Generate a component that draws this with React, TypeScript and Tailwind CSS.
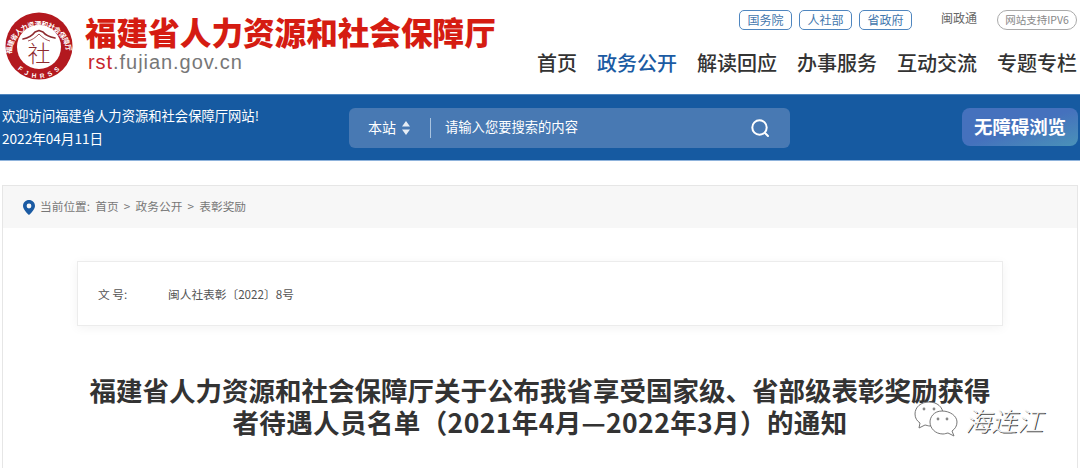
import React from 'react';

const FONT = "font-['Noto_Sans_CJK_SC','Noto_Sans',sans-serif]";

const Logo: React.FC = () => (
  <svg width="70" height="70" viewBox="0 0 70 70" className="shrink-0">
    <defs>
      <path id="ringTop" d="M8.5 42 A27.5 27.5 0 1 1 63.5 42" />
      <path id="ringBottom" d="M7 42 A29.5 29.5 0 0 0 65 42" />
    </defs>
    <circle cx="36" cy="34" r="33.5" fill="#b3191f" />
    <circle cx="36" cy="35" r="22" fill="#fff" />
    <text fontSize="7" fontWeight="700" fill="#fff" fontFamily="Noto Sans CJK SC, serif" textLength="84">
      <textPath href="#ringTop">福建省人力资源和社会保障厅</textPath>
    </text>
    <text fontSize="6.5" fontWeight="700" fill="#fff" fontFamily="Liberation Sans, sans-serif" letterSpacing="4.2">
      <textPath href="#ringBottom" startOffset="17">FJHRSS</textPath>
    </text>
    {/* roof */}
    <path d="M20 27 C25 26 29 24 32 20 L36 18.5 L40 20 C43 24 47 25 52 26" fill="none" stroke="#8e2a2e" strokeWidth="1.6" strokeLinecap="round" strokeLinejoin="round" />
    <path d="M25 29 C29 28 32 26 36 22 C40 26 43 28 47 29" fill="none" stroke="#8e2a2e" strokeWidth="0.8" />
    <text x="36" y="50" textAnchor="middle" fontSize="23" fontWeight="300" fill="#8e2a2e" fontFamily="Noto Sans CJK SC, sans-serif">社</text>
  </svg>
);

const WeChat: React.FC = () => (
  <svg width="44" height="36" viewBox="0 0 44 36" fill="#fff" stroke="#777" strokeWidth="1">
    <path d="M15 1 C7 1 1 6 1 13 C1 17 3 20 6 22 L5 27 L11 24 C12 24 14 25 16 25 C24 25 29 19 29 13 C29 6 23 1 15 1 Z" />
    <path d="M28 10 C20 10 16 16 16 21 C16 27 21 33 29 33 C31 33 33 32 34 32 L40 35 L38 30 C41 28 43 25 43 21 C43 15 36 10 28 10 Z" />
    <circle cx="10" cy="8" r="1.4" fill="#888" stroke="none" />
    <circle cx="20" cy="8" r="1.4" fill="#888" stroke="none" />
    <circle cx="24" cy="18" r="1.4" fill="#888" stroke="none" />
    <circle cx="33" cy="18" r="1.4" fill="#888" stroke="none" />
  </svg>
);

export default function App() {
  return (
    <div className={`relative h-[468px] w-[1080px] overflow-hidden bg-white ${FONT}`}>
      {/* Header */}
      <header className="flex h-[95px] border-b border-[#4f86bf]">
        <div className="ml-[3px] mt-[12px]">
          <Logo />
        </div>
        <div className="ml-[12px] mt-[9px]">
          <h1 className="text-[31.6px] leading-[44px] font-black text-[#d51c12] whitespace-nowrap">福建省人力资源和社会保障厅</h1>
          <div className="ml-[3px] mt-[-3px] font-['Liberation_Sans',sans-serif] text-[20px] leading-[24px] tracking-[0.95px] text-[#777]">
            <span className="text-[#c8252a]">rst</span>.fujian.gov.cn
          </div>
        </div>
        <div className="ml-auto mr-[3px] flex flex-col items-end">
          <div className="mt-[9px] flex items-center text-[12px]">
            <div className="flex gap-[7px]">
              {['国务院', '人社部', '省政府'].map((s) => (
                <a key={s} className="flex h-[20px] w-[53px] items-center justify-center rounded-[5px] border border-[#4f86bf] text-[#4377ad]">{s}</a>
              ))}
            </div>
            <span className="mb-[4px] ml-[29px] text-[#666]">闽政通</span>
            <span className="ml-[20px] flex h-[20px] w-[80px] items-center justify-center rounded-full border border-[#aaa] text-[10.5px] text-[#888]">网站支持IPV6</span>
          </div>
          <nav className="mt-[18px] flex gap-[20px] text-[20px] leading-[28px] font-medium text-[#333]">
            <a>首页</a>
            <a className="text-[#1b5ba3]">政务公开</a>
            <a>解读回应</a>
            <a>办事服务</a>
            <a>互动交流</a>
            <a>专题专栏</a>
          </nav>
        </div>
      </header>

      {/* Blue bar */}
      <div className="flex h-[66px] items-center border-b border-[#8fb3dc] bg-[#165aa1] text-white">
        <div className="mb-[2px] ml-[2px] w-[347px] text-[13.3px]">
          <p className="leading-[23px]">欢迎访问福建省人力资源和社会保障厅网站!</p>
          <p className="text-[13.6px] leading-[23px]">2022年04月11日</p>
        </div>
        <div className="flex h-[40px] w-[441px] items-center rounded-[6px] bg-[#4879b3] text-[13.3px]">
          <span className="ml-[19px] text-[14px]">本站</span>
          <svg width="8" height="14" viewBox="0 0 8 14" className="ml-[6px]" fill="#e6edf5">
            <path d="M4 0 L8 5.5 H0 Z M4 14 L8 8.5 H0 Z" />
          </svg>
          <span className="ml-[20px] h-[20px] w-px bg-[#a9c3df]" />
          <span className="mb-[2px] ml-[14px]">请输入您要搜索的内容</span>
          <svg width="20" height="20" viewBox="0 0 20 20" className="ml-auto mr-[20px]" fill="none" stroke="#fff" strokeWidth="2" strokeLinecap="round">
            <circle cx="9.5" cy="9.5" r="7.2" />
            <path d="M15 15 L18 18" />
          </svg>
        </div>
        <div className="mb-[2px] ml-[172px] flex h-[38px] w-[116px] items-center justify-center rounded-[8px] bg-gradient-to-br from-[#4571bd] from-50% to-[#4a92b8] text-[18.4px] font-bold">
          无障碍浏览
        </div>
      </div>

      {/* Main panel */}
      <main className="mx-[2px] mt-[24px] h-[400px] border border-[#e6e6e6]">
        <div className="flex h-[42px] items-center bg-[#f7f7f7] pl-[20px] text-[11.7px] text-[#777]">
          <svg width="12" height="15" viewBox="0 0 12 15" fill="#1b5ba3">
            <path fillRule="evenodd" d="M6 0 C2.7 0 0 2.6 0 5.9 C0 9.8 6 15 6 15 C6 15 12 9.8 12 5.9 C12 2.6 9.3 0 6 0 Z M6 3.6 A2.4 2.4 0 1 1 6 8.4 A2.4 2.4 0 1 1 6 3.6 Z" />
          </svg>
          <span className="mb-[2px] ml-[5px] whitespace-pre">当前位置:  首页  &gt;  政务公开  &gt;  表彰奖励</span>
        </div>

        <div className="ml-[74px] mt-[33px] flex h-[65px] w-[926px] items-center border border-[#ececec] pl-[20px] text-[11.7px] text-[#555] shadow-[0_2px_10px_rgba(0,0,0,0.05)]">
          <span className="w-[70px]">文 号:</span>
          <span>闽人社表彰〔2022〕8号</span>
        </div>

        <h2 className="mt-[48px] text-center text-[26.5px] leading-[32px] font-bold text-[#333]">
          <span className="block whitespace-nowrap">福建省人力资源和社会保障厅关于公布我省享受国家级、省部级表彰奖励获得</span>
          <span className="block whitespace-nowrap tracking-[0.4px]">者待遇人员名单（2021年4月—2022年3月）的通知</span>
        </h2>
      </main>

      {/* WeChat watermark */}
      <div className="absolute left-[914px] top-[401px] flex items-start">
        <WeChat />
        <span className="ml-[7px] mt-[2px] text-[26px] leading-[34px] font-light italic text-[#f4f4f4] [text-shadow:1px_1px_0_#444]">海连江</span>
      </div>
    </div>
  );
}
